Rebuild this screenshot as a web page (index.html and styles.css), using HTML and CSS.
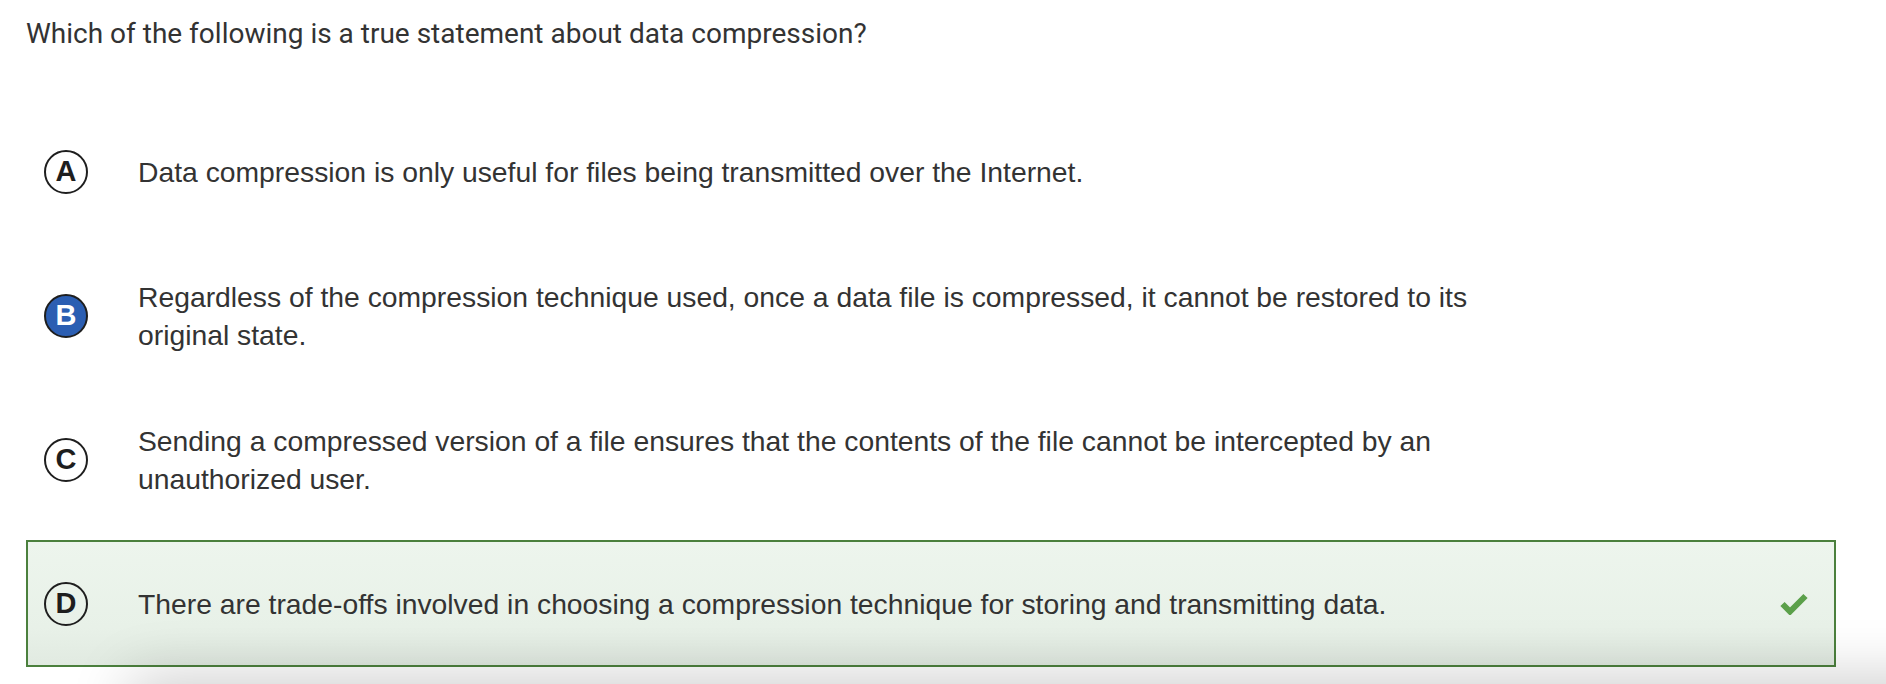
FILE: index.html
```html
<!DOCTYPE html>
<html lang="en">
<head>
<meta charset="utf-8">
<title>Question</title>
<link rel="stylesheet" href="styles.css">
</head>
<body>
<div class="page">
  <p class="question">Which of the following is a true statement about data compression?</p>
  <ul class="options">
    <li class="option">
      <span class="badge">A</span>
      <span class="text">Data compression is only useful for files being transmitted over the Internet.</span>
    </li>
    <li class="option">
      <span class="badge selected">B</span>
      <span class="text">Regardless of the compression technique used, once a data file is compressed, it cannot be restored to its original state.</span>
    </li>
    <li class="option">
      <span class="badge">C</span>
      <span class="text">Sending a compressed version of a file ensures that the contents of the file cannot be intercepted by an unauthorized user.</span>
    </li>
    <li class="option correct">
      <span class="badge">D</span>
      <span class="text">There are trade-offs involved in choosing a compression technique for storing and transmitting data.</span>
      <svg class="check" width="28" height="23" viewBox="0 0 28 23" aria-hidden="true">
        <path d="M2.5 12 L10 19.5 L25.5 4" fill="none" stroke="#5ba04a" stroke-width="6" stroke-linejoin="miter" stroke-linecap="butt"/>
      </svg>
    </li>
  </ul>
</div>
<div class="shade"></div>
</body>
</html>
```

FILE: styles.css
```css
html, body {
  margin: 0;
  padding: 0;
  background: #ffffff;
  overflow: hidden;
}

.page {
  padding: 15px 50px 0 26px;
}

.question {
  margin: 0;
  font-family: Roboto, "Liberation Sans", sans-serif;
  font-size: 28px;
  line-height: 38px;
  color: #333333;
}

.options {
  list-style: none;
  margin: 55px 0 0 0;
  padding: 0;
  display: flex;
  flex-direction: column;
  gap: 17px;
}

.option {
  display: flex;
  align-items: center;
  box-sizing: border-box;
  min-height: 127px;
  padding: 0 26px 0 16px;
  border: 2px solid transparent;
}

.option.correct {
  border-color: #4b803d;
  background: linear-gradient(to bottom, #edf5ed 0%, #e8f1e8 70%, #e1eae1 100%);
}

.badge {
  flex: none;
  box-sizing: border-box;
  width: 44px;
  height: 44px;
  border: 2px solid #1e1e1e;
  border-radius: 50%;
  display: flex;
  align-items: center;
  justify-content: center;
  font-family: "Liberation Sans", Arial, sans-serif;
  font-weight: bold;
  font-size: 29px;
  color: #1e1e1e;
  line-height: 1;
}

.badge.selected {
  background: #2b5eb2;
  color: #ffffff;
}

.text {
  margin-left: 50px;
  max-width: 1390px;
  font-family: "Liberation Sans", Arial, sans-serif;
  font-size: 28.3px;
  line-height: 38px;
  color: #333333;
}

.check {
  flex: none;
  margin-left: auto;
}

.shade {
  position: fixed;
  left: 160px;
  right: -300px;
  top: 708px;
  height: 100px;
  box-shadow: 0 0 60px 30px rgba(0, 0, 0, 0.2);
  pointer-events: none;
}
```
